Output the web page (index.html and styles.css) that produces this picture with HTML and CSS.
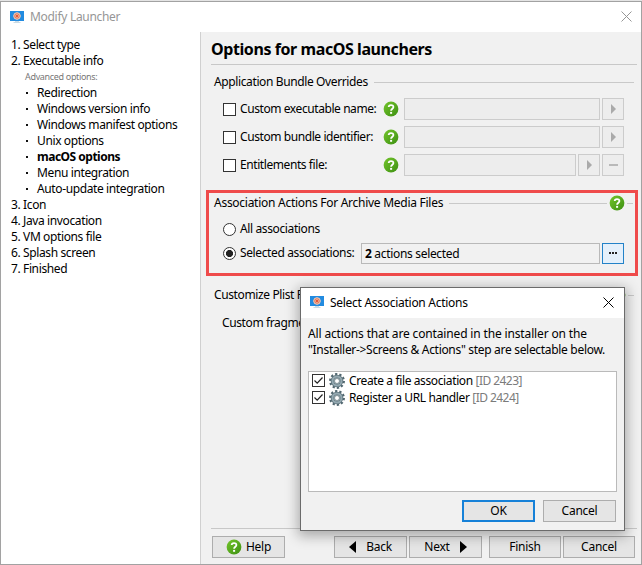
FILE: index.html
```html
<!DOCTYPE html>
<html lang="en">
<head>
<meta charset="utf-8">
<title>Modify Launcher</title>
<link rel="stylesheet" href="styles.css">
</head>
<body>
<svg class="defs" width="0" height="0" aria-hidden="true">
  <defs>
    <linearGradient id="green" x1="0" y1="0" x2="1" y2="1"><stop offset="0" stop-color="#74c52c"/><stop offset="1" stop-color="#3c8f12"/></linearGradient>
    <symbol id="help" viewBox="0 0 16 16"><circle cx="8" cy="8" r="7.4" fill="url(#green)"/><path d="M5.7 6.1C5.7 3.5 10.4 3.4 10.4 6.1C10.4 7.8 8.1 7.7 8.1 9.8" fill="none" stroke="#fff" stroke-width="1.8"/><rect x="7.1" y="10.9" width="2" height="1.9" fill="#fff"/></symbol>
    <symbol id="app" viewBox="0 0 14 13"><path d="M0 0H14V10H0Z" fill="#228be0"/><path d="M5 10H9V11H10.500V12H3.500V11H5Z" fill="#c9dbe6"/><circle cx="7" cy="5" r="3.300" fill="#d9775c" stroke="#f4d2c2"/><circle cx="7" cy="5" r="1.600" fill="#e2502f" stroke="#ffc9ad" stroke-width=".6"/></symbol>
    <symbol id="close" viewBox="0 0 11 11"><path d="M.5.5L10.500 10.500M10.500.5L.5 10.500" fill="none" stroke="currentColor"/></symbol>
    <symbol id="gear" viewBox="0 0 16 16"><g fill="none"><circle cx="8" cy="8" r="6.700" stroke="#50666f" stroke-width="2.500" stroke-dasharray="2.200 2.010"/><circle cx="8" cy="8" r="4.500" stroke="#60757e" stroke-width="3.600"/><circle cx="8" cy="8" r="4.500" stroke="#94a9b1" stroke-width="2"/><circle cx="8" cy="8" r="2.500" fill="#fff" stroke="#556b74" stroke-width=".7"/></g></symbol>
    <symbol id="tri" viewBox="0 0 6 10" preserveAspectRatio="none"><path d="M0 0L6 5L0 10Z" fill="currentColor"/></symbol>
    <symbol id="check" viewBox="0 0 11 11"><path d="M1.500 5.500L4.200 8.200L9.500 2.500" fill="none" stroke="#222" stroke-width="1.200"/></symbol>
  </defs>
</svg>
<div class="window">
  <header class="titlebar"><svg class="app"><use href="#app"/></svg><span class="t-title">Modify Launcher</span><svg class="close"><use href="#close"/></svg></header>
  <div class="body">
    <nav class="steps">
      <div>1. Select type</div>
      <div>2. Executable info</div>
      <div class="advanced">Advanced options:</div>
      <div class="sub">Redirection</div>
      <div class="sub">Windows version info</div>
      <div class="sub">Windows manifest options</div>
      <div class="sub">Unix options</div>
      <div class="sub current">macOS options</div>
      <div class="sub">Menu integration</div>
      <div class="sub">Auto-update integration</div>
      <div>3. Icon</div>
      <div>4. Java invocation</div>
      <div>5. VM options file</div>
      <div>6. Splash screen</div>
      <div>7. Finished</div>
    </nav>
    <main class="content">
      <h1>Options for macOS launchers</h1>
      <div class="group"><span>Application Bundle Overrides</span><i class="rule"></i></div>
      <div class="overrides">
        <div class="row"><i class="box"></i><label>Custom executable name:</label><svg class="help"><use href="#help"/></svg><i class="field"></i><i class="small"><svg class="tri"><use href="#tri"/></svg></i></div>
        <div class="row"><i class="box"></i><label>Custom bundle identifier:</label><svg class="help"><use href="#help"/></svg><i class="field"></i><i class="small"><svg class="tri"><use href="#tri"/></svg></i></div>
        <div class="row"><i class="box"></i><label>Entitlements file:</label><svg class="help"><use href="#help"/></svg><i class="field"></i><i class="small"><svg class="tri"><use href="#tri"/></svg></i><i class="small"><i class="dash"></i></i></div>
      </div>
      <section class="highlight">
        <div class="group"><span class="assoc">Association Actions For Archive Media Files</span><i class="rule"></i><svg class="help"><use href="#help"/></svg><i class="rule stub"></i></div>
        <div class="choice all"><i class="radio"></i><label>All associations</label></div>
        <div class="choice selected"><i class="radio on"></i><label>Selected associations:</label><div class="summary"><b>2</b> actions selected</div><button class="more"><i></i><i></i><i></i></button></div>
      </section>
      <div class="group plist"><span>Customize Plist File</span><i class="rule"></i><svg class="help"><use href="#help"/></svg><i class="rule stub"></i></div>
      <div class="fragment">Custom fragment:</div>
      <footer class="footer">
        <button class="helpbtn"><svg class="help"><use href="#help"/></svg>Help</button>
        <button class="back"><svg class="tri left"><use href="#tri"/></svg>Back</button>
        <button class="next">Next<svg class="tri"><use href="#tri"/></svg></button>
        <button class="finish">Finish</button>
        <button class="cancel">Cancel</button>
      </footer>
    </main>
  </div>
</div>
<div class="dialog">
  <header class="dialog-title"><svg class="app"><use href="#app"/></svg><span>Select Association Actions</span><svg class="close"><use href="#close"/></svg></header>
  <p class="l1">All actions that are contained in the installer on the<br><span class="l2">"Installer-&gt;Screens &amp; Actions" step are selectable below.</span></p>
  <div class="list">
    <div class="item"><i class="box"><svg><use href="#check"/></svg></i><svg class="gear"><use href="#gear"/></svg><span>Create a file association <em>[ID 2423]</em></span></div>
    <div class="item"><i class="box"><svg><use href="#check"/></svg></i><svg class="gear"><use href="#gear"/></svg><span>Register a URL handler <em>[ID 2424]</em></span></div>
  </div>
  <div class="actions"><button class="ok">OK</button><button>Cancel</button></div>
</div>
</body>
</html>
```
FILE: styles.css
```css
* { box-sizing: border-box; }
body { margin: 0; width: 642px; height: 565px; overflow: hidden; position: relative; background: #e4e4e4; font: 12px/16px "Noto Sans", "Open Sans", sans-serif; letter-spacing: -.38px; color: #000; }
i, em { font-style: normal; }
svg { display: block; flex: none; }
.defs { position: absolute; }
.window { margin-top: 1px; height: 564px; border: 1px solid #a2a2a2; background: #f1f1f1; display: flex; flex-direction: column; }
.titlebar { height: 30px; flex: none; background: #fff; display: flex; align-items: center; padding: 0 9px 0 9px; color: #969696; letter-spacing: -.3px; }
.titlebar span { margin-left: 6px; }
.app { width: 14px; height: 13px; }
.close { width: 11px; height: 11px; margin-left: auto; }
.titlebar .close { margin-top: -2px; }
.body { flex: 1; display: flex; min-height: 0; }
.steps { width: 200px; flex: none; background: #fff; border-right: 1px solid #d0d0d0; padding: 5px 0 0 10px; white-space: nowrap; }
.advanced { font-size: 9px; color: #777; padding-left: 14px; }
.sub { display: flex; align-items: center; padding-left: 15px; }
.sub::before { content: ""; width: 2px; height: 2px; background: #111; margin-right: 9px; }
.advanced { letter-spacing: -.33px; }
.current { font-weight: bold; letter-spacing: -.5px; }
.content { flex: 1; min-width: 0; display: flex; flex-direction: column; }
h1 { margin: 0 4px 0 10px; height: 33px; border-bottom: 1px solid #c8c8c8; font-size: 16px; line-height: 34px; letter-spacing: -.42px; flex: none; }
.group { display: flex; align-items: center; height: 16px; margin: 9px 7px 0 13px; flex: none; white-space: nowrap; }
.assoc { letter-spacing: -.27px; }
.rule { flex: 1; height: 1px; background: #c9c9c9; margin-left: 6px; }
.stub { flex: 0 0 6px; margin-left: 2px; }
.help { width: 16px; height: 16px; }
.group .help { margin-left: 2px; }
.overrides { margin: 8px 17px 0 22px; display: flex; flex-direction: column; gap: 6px; }
.row { display: flex; align-items: center; height: 22px; gap: 2px; }
.box { width: 13px; height: 13px; border: 1px solid #333; background: #fff; flex: none; display: block; }
.row label { width: 141px; flex: none; margin-left: 2px; white-space: nowrap; letter-spacing: -.42px; }
.row .help { margin: 0 3px 0 0; }
.field { flex: 1; height: 22px; border: 1px solid #ccc; background: #ededed; }
.small { width: 22px; height: 22px; border: 1px solid #ccc; background: #ededed; display: flex; align-items: center; justify-content: center; color: #aaa; }
.tri { width: 5px; height: 10px; }
.dash { width: 9px; height: 2px; background: #b9b9b9; }
.highlight { margin: 14px 3px 0 5px; height: 86px; border: 3px solid #ef4b4b; flex: none; }
.highlight .group { margin: 2px 2px 0 5px; }
.choice { display: flex; align-items: center; height: 22px; margin: 7px 11px 0 14px; white-space: nowrap; }
.choice.selected { margin-top: 2px; }
.radio { width: 13px; height: 13px; border: 1px solid #333; border-radius: 50%; background: #fff; flex: none; margin-right: 4px; }
.radio.on { background: radial-gradient(circle, #222 0 3.2px, #fff 3.9px); }
.choice label { width: 121px; flex: none; letter-spacing: -.38px; }
.summary { flex: 1; height: 21px; line-height: 19px; border: 1px solid #b9b9b9; padding-left: 3px; letter-spacing: -.32px; }
button { font: inherit; letter-spacing: -.25px; color: inherit; margin: 0; padding: 0; width: 73px; height: 22px; border: 1px solid #adadad; background: #e5e5e5; display: flex; align-items: center; justify-content: center; flex: none; }
.more { width: 22px; height: 21px; margin-left: 2px; border-color: #2382c8; background: #e4f0fb; gap: 1px; }
.more i { width: 2px; height: 2px; background: #222; }
.plist { margin-top: 11px; }
.fragment { margin: 12px 0 0 21px; letter-spacing: -.38px; }
.footer { margin: auto 4px 6px 10px; border-top: 1px solid #c8c8c8; padding: 7px 0 0 1px; display: flex; }
.footer .tri { width: 7px; height: 12px; }
.helpbtn .help { margin-right: 4px; }
.back { margin-left: 49px; }
.back .tri { transform: scaleX(-1); margin-right: 10px; }
.next { margin-left: 2px; }
.next .tri { margin-left: 10px; }
.finish { width: 72px; margin-left: 7px; }
.cancel { width: 72px; margin-left: 2px; }
.dialog { position: absolute; left: 300px; top: 287px; width: 325px; height: 244px; border: 1px solid #6b6b6b; background: #f1f1f1; box-shadow: 0 3px 12px 2px rgba(0,0,0,.3); }
.dialog-title { height: 30px; background: #fff; display: flex; align-items: center; padding: 0 10px 0 9px; }
.dialog-title .close { margin-top: -2px; }
.dialog-title .app { margin-top: -1px; }
.dialog-title span { margin-left: 6px; letter-spacing: -.28px; }
.dialog p { margin: 8px 0 0 7px; white-space: nowrap; letter-spacing: -.15px; }
.dialog .l2 { letter-spacing: -.31px; }
.list { margin: 13px 7px 0; height: 121px; border: 1px solid #bababa; background: #fff; padding: 0 3px; }
.item { display: flex; align-items: center; height: 17px; white-space: nowrap; }
.item .box svg { width: 11px; height: 11px; }
.gear { width: 16px; height: 16px; margin: 0 4px; }
em { color: #7b7b7b; letter-spacing: -.55px; }
.actions { display: flex; justify-content: flex-end; gap: 8px; margin: 8px 8px 0 0; }
.ok { border: 2px solid #1681d8; }
```
